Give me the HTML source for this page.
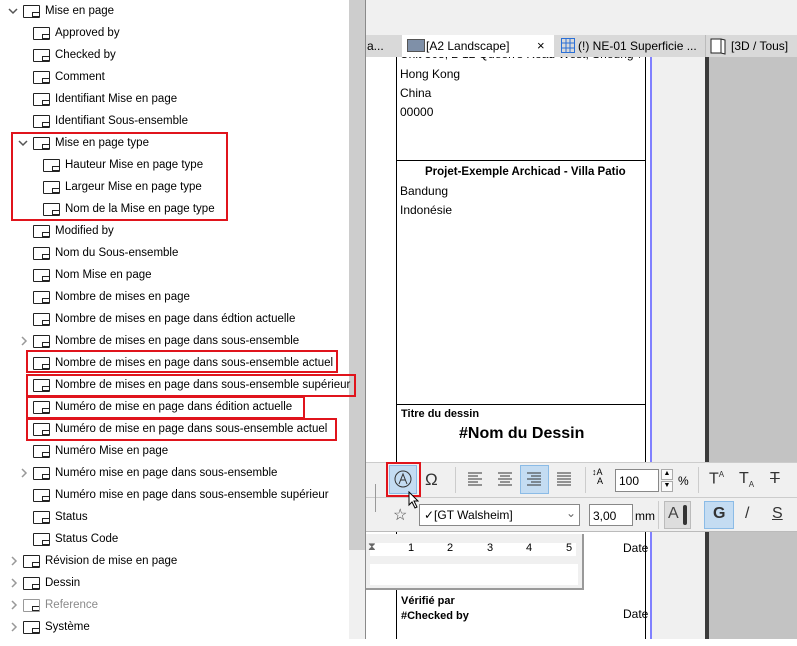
<!DOCTYPE html>
<html><head><meta charset="utf-8"><style>
*{margin:0;padding:0;box-sizing:border-box}
body{width:797px;height:639px;position:relative;overflow:hidden;background:#fff;font-family:"Liberation Sans",sans-serif;font-size:11.5px;color:#000}
.a{position:absolute}
.row{position:absolute;height:22px;line-height:22px;white-space:nowrap}
.ic{position:absolute;top:5px;width:17px;height:13px;border:1.2px solid #222;border-radius:1px}
.ic:after{content:"";position:absolute;right:0;bottom:0;width:6px;height:4px;border-top:1px solid #222;border-left:1px solid #222;box-shadow:inset 0 -1px 0 #222}
.red{position:absolute;border:2px solid #e0141c}
.tb{position:absolute;font-size:12px;white-space:nowrap}
</style></head><body>
<div class="a" style="left:0;top:0;width:349px;height:639px;background:#fff"></div>
<div class="a" style="left:349px;top:0;width:16px;height:639px;background:#f0f0f0"></div>
<div class="a" style="left:349px;top:0;width:16px;height:550px;background:#cdcdcd"></div>
<div class="a" style="left:365px;top:0;width:1px;height:639px;background:#8a8a8a"></div>

<div id="tree"></div>
<script>
var rows=[
[0,"Mise en page","v"],[1,"Approved by"],[1,"Checked by"],[1,"Comment"],[1,"Identifiant Mise en page"],[1,"Identifiant Sous-ensemble"],
[1,"Mise en page type","v"],[2,"Hauteur Mise en page type"],[2,"Largeur Mise en page type"],[2,"Nom de la Mise en page type"],
[1,"Modified by"],[1,"Nom du Sous-ensemble"],[1,"Nom Mise en page"],[1,"Nombre de mises en page"],[1,"Nombre de mises en page dans édtion actuelle"],
[1,"Nombre de mises en page dans sous-ensemble",">"],[1,"Nombre de mises en page dans sous-ensemble actuel"],[1,"Nombre de mises en page dans sous-ensemble supérieur"],
[1,"Numéro de mise en page dans édition actuelle"],[1,"Numéro de mise en page dans sous-ensemble actuel"],[1,"Numéro Mise en page"],
[1,"Numéro mise en page dans sous-ensemble",">"],[1,"Numéro mise en page dans sous-ensemble supérieur"],[1,"Status"],[1,"Status Code"],
[0,"Révision de mise en page",">"],[0,"Dessin",">"],[0,"Reference",">"],[0,"Système",">"]];
var h="";
rows.forEach(function(r,i){
 var y=i*22, ix=23+r[0]*10, tx=45+r[0]*10;
 var col=r[1]=="Reference"?"#8a8a8a":"#000";
 if(r[2]=="v") h+='<div class="row" style="top:'+y+'px;left:'+(ix-15)+'px"><svg width="10" height="22"><path d="M1 9l4 4 4-4" stroke="#555" stroke-width="1.5" fill="none"/></svg></div>';
 if(r[2]==">") h+='<div class="row" style="top:'+y+'px;left:'+(ix-14)+'px"><svg width="10" height="22"><path d="M3 7l4 4-4 4" stroke="#999" stroke-width="1.5" fill="none"/></svg></div>';
 h+='<div class="row" style="top:'+y+'px;left:'+ix+'px;width:18px"><div class="ic" style="border-color:'+(col=="#000"?"#222":"#999")+'"></div></div>';
 h+='<div class="row" style="top:'+y+'px;left:'+tx+'px;color:'+col+'">'+r[1]+'</div>';
});
document.getElementById("tree").innerHTML=h;
</script>
<div class="red" style="left:11px;top:132px;width:217px;height:89px"></div>
<div class="red" style="left:26px;top:350px;width:312px;height:23px"></div>
<div class="red" style="left:26px;top:374px;width:330px;height:23px"></div>
<div class="red" style="left:26px;top:396px;width:279px;height:23px"></div>
<div class="red" style="left:26px;top:418px;width:311px;height:23px"></div>

<div class="a" style="left:366px;top:0;width:431px;height:35px;background:#f0f0f0"></div>
<div class="a" style="left:366px;top:35px;width:431px;height:22px;background:#d9d9d9"></div>
<div class="tb" style="left:367px;top:39px">a...</div>
<div class="a" style="left:402px;top:35px;width:152px;height:22px;background:#fff"></div>
<div class="a" style="left:407px;top:39px;width:18px;height:13px;background:#7f90a8;border:1px solid #555"></div>
<div class="tb" style="left:426px;top:39px">[A2 Landscape]</div>
<div class="tb" style="left:537px;top:38px;font-size:13px">×</div>
<svg class="a" style="left:561px;top:38px" width="14" height="15"><g stroke="#2a6fd6" fill="none"><rect x="0.5" y="0.5" width="13" height="14"/><path d="M5 0v15M9 0v15M0 5h14M0 10h14"/></g></svg>
<div class="tb" style="left:578px;top:39px">(!) NE-01 Superficie ...</div>
<div class="a" style="left:705px;top:35px;width:1px;height:22px;background:#bbb"></div>
<svg class="a" style="left:710px;top:37px" width="17" height="18"><path d="M1 2l10 0 4 1v14l-4-1H1z M11 2v14" stroke="#222" fill="#fff"/></svg>
<div class="tb" style="left:731px;top:39px">[3D / Tous]</div>

<div class="a" style="left:652px;top:57px;width:53px;height:582px;background:#f0f0f0"></div>
<div class="a" style="left:650px;top:57px;width:2px;height:582px;background:#8080ff"></div>
<div class="a" style="left:705px;top:57px;width:4px;height:582px;background:#3a3a3a"></div>
<div class="a" style="left:709px;top:57px;width:88px;height:582px;background:#c3c3c3"></div>
<div class="a" style="left:396px;top:57px;width:1px;height:582px;background:#000"></div>
<div class="a" style="left:645px;top:57px;width:1px;height:582px;background:#000"></div>
<div class="a" style="left:396px;top:160px;width:250px;height:1px;background:#000"></div>
<div class="a" style="left:396px;top:404px;width:250px;height:1px;background:#000"></div>

<div class="tb" style="left:400px;top:57px;height:5px;overflow:hidden;width:240px"><div style="margin-top:-10px">Unit 808, 2-12 Queen's Road West, Sheung Wan</div></div>
<div class="tb" style="left:400px;top:67px">Hong Kong</div>
<div class="tb" style="left:400px;top:86px">China</div>
<div class="tb" style="left:400px;top:105px">00000</div>
<div class="tb" style="left:425px;top:166px;font-weight:bold;font-size:11.5px">Projet-Exemple Archicad - Villa Patio</div>
<div class="tb" style="left:400px;top:184px">Bandung</div>
<div class="tb" style="left:400px;top:203px">Indonésie</div>
<div class="tb" style="left:401px;top:408px;font-size:11px;font-weight:bold">Titre du dessin</div>
<div class="tb" style="left:459px;top:425px;font-size:16px;font-weight:bold">#Nom du Dessin</div>
<div class="tb" style="left:623px;top:541px">Date</div>
<div class="tb" style="left:623px;top:607px">Date</div>
<div class="tb" style="left:401px;top:595px;font-size:11px;font-weight:bold">Vérifié par</div>
<div class="tb" style="left:401px;top:610px;font-size:11px;font-weight:bold">#Checked by</div>

<div class="a" style="left:366px;top:462px;width:431px;height:70px;background:#f0f0f0;border-top:1px solid #ccc;border-bottom:1px solid #bbb"></div>
<div class="a" style="left:366px;top:497px;width:431px;height:1px;background:#ccc"></div>
<div class="a" style="left:375px;top:484px;width:1px;height:28px;background:#999"></div>
<div class="a" style="left:389px;top:465px;width:28px;height:29px;background:#c4dcf2;border:1px solid #8bbbe6"></div>
<div class="red" style="left:386px;top:462px;width:35px;height:35px"></div>
<svg class="a" style="left:393px;top:469px" width="20" height="20"><circle cx="10" cy="10" r="8" fill="none" stroke="#333"/><path d="M6 15l4-10 4 10M7.5 11h5" stroke="#333" fill="none"/></svg>
<svg class="a" style="left:408px;top:491px" width="12" height="18"><path d="M1 1v13l3-3 3 6 2-1-3-6h4z" fill="#fff" stroke="#000"/></svg>
<div class="tb" style="left:425px;top:470px;font-size:17px;color:#333">Ω</div>
<div class="a" style="left:455px;top:467px;width:1px;height:26px;background:#ccc"></div>
<div class="a" style="left:520px;top:465px;width:29px;height:29px;background:#c4dcf2;border:1px solid #8bbbe6"></div>
<svg class="a" style="left:466px;top:472px" width="110" height="14" stroke="#333"><path d="M2 1h14M2 4h10M2 7h14M2 10h10M2 13h14"/><path d="M32 1h14M34 4h10M32 7h14M34 10h10M32 13h14"/><path d="M61 1h14M65 4h10M61 7h14M65 10h10M61 13h14"/><path d="M91 1h14M91 4h14M91 7h14M91 10h14M91 13h14"/></svg>
<div class="a" style="left:585px;top:467px;width:1px;height:26px;background:#ccc"></div>
<div class="tb" style="left:592px;top:468px;font-size:9px;line-height:9px">↕A<br>&nbsp;&nbsp;A</div>
<div class="a" style="left:615px;top:469px;width:44px;height:23px;background:#fff;border:1px solid #888"></div>
<div class="tb" style="left:619px;top:474px">100</div>
<div class="a" style="left:661px;top:469px;width:12px;height:11px;border:1px solid #aaa;background:#fafafa;font-size:7px;text-align:center">▲</div>
<div class="a" style="left:661px;top:481px;width:12px;height:11px;border:1px solid #aaa;background:#fafafa;font-size:7px;text-align:center">▼</div>
<div class="tb" style="left:678px;top:474px">%</div>
<div class="a" style="left:698px;top:467px;width:1px;height:26px;background:#ccc"></div>
<div class="tb" style="left:709px;top:470px;font-size:16px;color:#333">T<sup style="font-size:8px">A</sup></div>
<div class="tb" style="left:739px;top:470px;font-size:16px;color:#333">T<sub style="font-size:8px">A</sub></div>
<div class="tb" style="left:770px;top:470px;font-size:16px;color:#333;text-decoration:line-through">T</div>

<div class="tb" style="left:393px;top:505px;font-size:16px;color:#444">☆</div>
<div class="a" style="left:419px;top:504px;width:161px;height:22px;background:#fff;border:1px solid #888"></div>
<div class="tb" style="left:424px;top:508px">✓[GT Walsheim]</div>
<div class="tb" style="left:566px;top:506px;color:#666">⌄</div>
<div class="a" style="left:589px;top:504px;width:44px;height:22px;background:#fff;border:1px solid #888"></div>
<div class="tb" style="left:593px;top:509px">3,00</div>
<div class="tb" style="left:635px;top:509px">mm</div>
<div class="a" style="left:658px;top:501px;width:1px;height:28px;background:#ccc"></div>
<div class="a" style="left:664px;top:501px;width:27px;height:28px;background:#ddd;border:1px solid #bbb"></div>
<div class="tb" style="left:668px;top:505px;font-size:16px;color:#444">A</div>
<div class="a" style="left:683px;top:505px;width:4px;height:20px;background:#333;border-radius:2px"></div>
<div class="a" style="left:704px;top:501px;width:30px;height:28px;background:#c4dcf2;border:1px solid #8bbbe6"></div>
<div class="tb" style="left:713px;top:505px;font-size:16px;font-weight:bold;color:#333">G</div>
<div class="tb" style="left:745px;top:505px;font-size:16px;color:#333">/</div>
<div class="tb" style="left:772px;top:505px;font-size:16px;color:#333;text-decoration:underline">S</div>

<div class="a" style="left:366px;top:534px;width:218px;height:56px;background:#f0f0f0;border-right:2px solid #999;border-bottom:2px solid #999"></div>
<div class="a" style="left:370px;top:543px;width:206px;height:13px;background:#fff"></div>
<div class="a" style="left:370px;top:564px;width:208px;height:21px;background:#fff"></div>
<div class="tb" style="left:368px;top:541px;font-size:11px;color:#666">⧗</div>
<div class="tb" style="left:408px;top:542px;font-size:11px">1</div>
<div class="tb" style="left:447px;top:542px;font-size:11px">2</div>
<div class="tb" style="left:487px;top:542px;font-size:11px">3</div>
<div class="tb" style="left:526px;top:542px;font-size:11px">4</div>
<div class="tb" style="left:566px;top:542px;font-size:11px">5</div>
</body></html>
